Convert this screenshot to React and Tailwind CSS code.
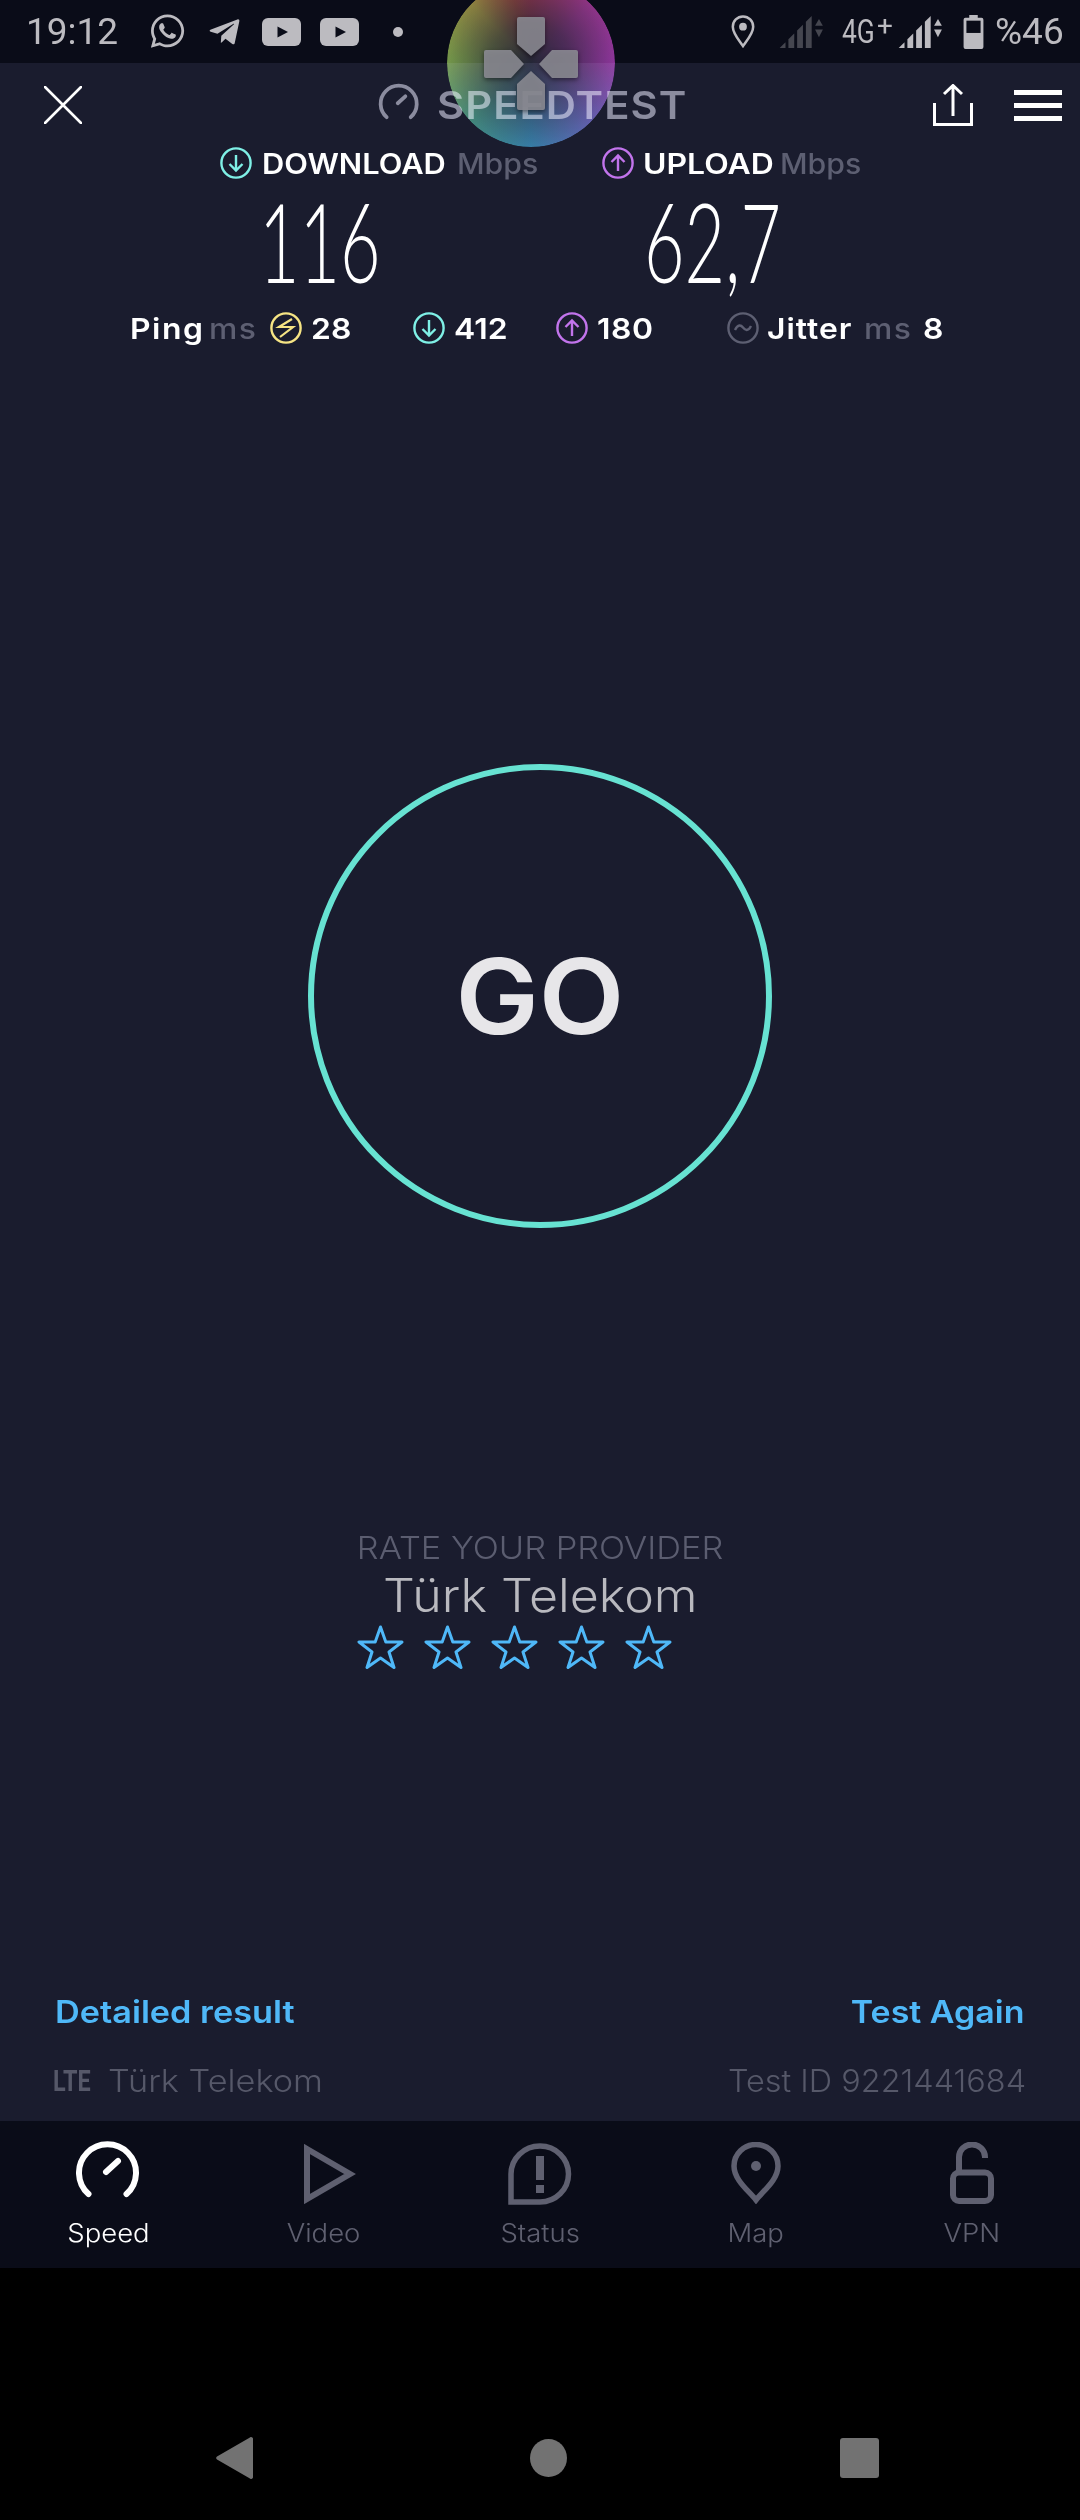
import React from "react";
import { FaWhatsapp, FaTelegramPlane } from "react-icons/fa";

const Gauge = ({ className, sw = 6 }) => (
  <svg viewBox="0 0 64 60" className={className} fill="none" stroke="currentColor" strokeWidth={sw} strokeLinecap="round">
    <path d="M12.5 54 A28.5 28.5 0 1 1 50.5 54" />
    <path d="M30 32 L42 21" />
  </svg>
);

const CircleArrow = ({ up, className }) => (
  <svg viewBox="0 0 32 32" className={className} fill="none" stroke="currentColor" strokeWidth="2.4">
    <circle cx="16" cy="16" r="14.6" />
    {up ? <path d="M16 24 V9 M9.5 15 L16 8.5 L22.5 15" /> : <path d="M16 8 V23 M9.5 17 L16 23.5 L22.5 17" />}
  </svg>
);

const Yt = () => (
  <svg viewBox="0 0 39 28" className="w-[39px] h-[28px] shrink-0">
    <rect width="39" height="28" rx="6" fill="#bcbbc0" />
    <path d="M15.5 8.5 L26 14 L15.5 19.5 Z" fill="#0a0c18" />
  </svg>
);

const Signal = ({ color, arrowUp, arrowDown }) => (
  <svg viewBox="0 0 45 34" className="w-[45px] h-[33px] shrink-0">
    <path d="M0 34 L6 28 V34 Z" fill={color} />
    <path d="M9 34 V25 L15 19 V34 Z" fill={color} />
    <path d="M18 34 V16 L24 10 V34 Z" fill={color} />
    <path d="M27 34 V7 L33 1 V34 Z" fill={color} />
    <path d="M36.5 11 L40.5 4 L44.5 11 Z" fill={arrowUp} />
    <path d="M36.5 15 L44.5 15 L40.5 23 Z" fill={arrowDown} />
  </svg>
);

const Star = () => (
  <svg viewBox="0 0 47 44" className="w-[47px] h-[44px] shrink-0" fill="none" stroke="#4fb8f8" strokeWidth="3" strokeLinejoin="round">
    <path d="M23.5 2 L28.8 17 L45 17 L32 27 L37 42.5 L23.5 33 L10 42.5 L15 27 L2 17 L18.2 17 Z" />
  </svg>
);

export default function App() {
  return (
    <div className="relative w-[1080px] h-[2520px] bg-black overflow-hidden flex flex-col font-['Inter','Liberation_Sans',sans-serif]">
      {/* Status bar */}
      <div className="h-[63px] shrink-0 bg-[#0a0c18] flex items-center text-[#bcbbc0] font-['Roboto',sans-serif]">
        <span className="ml-[26px] w-[100px] text-[37px] leading-none">19:12</span>
        <FaWhatsapp className="ml-[23px] w-[37px] h-[38px] shrink-0 -mt-[1px]" />
        <FaTelegramPlane className="ml-[20px] w-[37px] h-[34px] shrink-0" />
        <div className="ml-[19px]"><Yt /></div>
        <div className="ml-[19px]"><Yt /></div>
        <div className="ml-[34px] w-[10px] h-[10px] rounded-full bg-[#bcbbc0]" />
        <svg viewBox="0 0 24 34" className="ml-[328px] w-[24px] h-[33px] shrink-0" fill="none" stroke="#bcbbc0" strokeWidth="2.6">
          <path d="M12 32 C8 26 1.5 19 1.5 12 A10.5 10.5 0 0 1 22.5 12 C22.5 19 16 26 12 32 Z" />
          <circle cx="12" cy="12" r="4" fill="#bcbbc0" stroke="none" />
        </svg>
        <div className="ml-[24px]"><Signal color="#45464f" arrowUp="#45464f" arrowDown="#45464f" /></div>
        <span className="ml-[18px] w-[35px] text-[33px] leading-none scale-x-[0.8] origin-left">4G</span>
        <span className="w-[21px] text-[28px] leading-none -mt-[12px]">+</span>
        <div><Signal color="#bcbbc0" arrowUp="#bcbbc0" arrowDown="#bcbbc0" /></div>
        <svg viewBox="0 0 21 36" className="ml-[20px] w-[21px] h-[34px] shrink-0">
          <path d="M6 0 H15 V3 H19 A2 2 0 0 1 21 5 V34 A2 2 0 0 1 19 36 H2 A2 2 0 0 1 0 34 V5 A2 2 0 0 1 2 3 H6 Z" fill="#bcbbc0" />
          <rect x="3" y="6" width="15" height="13" fill="#0a0c18" />
        </svg>
        <span className="ml-[11px] text-[37px] leading-none">%46</span>
      </div>

      {/* Main */}
      <div className="h-[2058px] shrink-0 bg-[#1a1c2e] flex flex-col">
        {/* Header */}
        <div className="h-[84px] shrink-0 flex items-center text-white">
          <svg viewBox="0 0 38 38" className="ml-[44px] w-[38px] h-[38px] shrink-0" stroke="white" strokeWidth="2.6" strokeLinecap="round">
            <path d="M1 1 L37 37 M37 1 L1 37" />
          </svg>
          <Gauge className="ml-[296px] -mt-[6px] w-[42px] h-[38px] text-[#8b8c9f] shrink-0" sw={6} />
          <span className="ml-[17px] w-[249px] text-[38px] leading-none font-semibold text-[#8b8c9f] tracking-[0.9px] scale-x-[1.1] origin-left whitespace-nowrap">SPEEDTEST</span>
          <svg viewBox="0 0 40 42" className="ml-[247px] w-[40px] h-[42px] shrink-0" fill="none" stroke="white" strokeWidth="3">
            <path d="M1.5 19 V40.5 H38.5 V19" />
            <path d="M20 32 V2 M11 10 L20 1.5 L29 10" />
          </svg>
          <div className="ml-[41px] w-[48px] h-[31px] shrink-0 flex flex-col justify-between">
            <div className="h-[5px] bg-white" />
            <div className="h-[5px] bg-white" />
            <div className="h-[5px] bg-white" />
          </div>
        </div>

        {/* Titles */}
        <div className="h-[32px] shrink-0 flex items-center text-[28px] leading-none">
          <div className="w-[602px] shrink-0 flex items-center pl-[220px]">
            <CircleArrow className="w-[32px] h-[32px] text-[#7ff0e6] shrink-0" />
            <span className="ml-[10px] mt-[2px] w-[195px] font-semibold text-white whitespace-nowrap scale-x-[1.1] origin-left">DOWNLOAD</span>
            <span className="mt-[2px] font-medium text-[#5d5f72] whitespace-nowrap scale-x-[1.08] origin-left">Mbps</span>
          </div>
          <div className="flex items-center">
            <CircleArrow up className="w-[32px] h-[32px] text-[#c274ec] shrink-0" />
            <span className="ml-[9px] mt-[2px] w-[137px] font-semibold text-white whitespace-nowrap scale-x-[1.14] origin-left">UPLOAD</span>
            <span className="mt-[2px] font-medium text-[#5d5f72] whitespace-nowrap scale-x-[1.08] origin-left">Mbps</span>
          </div>
        </div>

        {/* Numbers */}
        <div className="h-[133px] pb-[12px] shrink-0 flex items-center text-white font-['Lato',sans-serif] font-light text-[111px] leading-[90px]">
          <div className="ml-[259px] w-[385px] shrink-0">
            <span className="inline-block scale-x-[0.63] origin-left">116</span>
          </div>
          <div>
            <span className="inline-block scale-x-[0.63] origin-left whitespace-nowrap">62,7</span>
          </div>
        </div>

        {/* Ping row */}
        <div className="h-[32px] shrink-0 flex items-center text-[29px] leading-none font-semibold text-white">
          <span className="ml-[130px] w-[79px] whitespace-nowrap tracking-[1.4px] scale-x-[1.1] origin-left">Ping</span>
          <span className="w-[61px] font-medium text-[#5d5f72] tracking-[1.4px] scale-x-[1.1] origin-left">ms</span>
          <svg viewBox="0 0 32 32" className="w-[32px] h-[32px] shrink-0" fill="none" stroke="#f6e484" strokeWidth="2.4">
            <circle cx="16" cy="16" r="14.6" />
            <path d="M22 7 L9 15 H23 L10 25" strokeWidth="2.2" />
          </svg>
          <span className="ml-[9px] w-[102px] scale-x-[1.1] origin-left">28</span>
          <CircleArrow className="w-[32px] h-[32px] text-[#7ff0e6] shrink-0" />
          <span className="ml-[9px] w-[102px] scale-x-[1.1] origin-left">412</span>
          <CircleArrow up className="w-[32px] h-[32px] text-[#c274ec] shrink-0" />
          <span className="ml-[9px] w-[130px] tracking-[0.5px] scale-x-[1.1] origin-left">180</span>
          <svg viewBox="0 0 32 32" className="w-[32px] h-[32px] shrink-0" fill="none" stroke="#5d5f72" strokeWidth="2.4">
            <circle cx="16" cy="16" r="14.6" />
            <path d="M8 18 C11 12 14 13 16 15.5 C18 18 21 20 24 14" />
          </svg>
          <span className="ml-[8px] w-[97px] whitespace-nowrap tracking-[0.9px] scale-x-[1.1] origin-left">Jitter</span>
          <span className="w-[59px] font-medium text-[#5d5f72] tracking-[1.4px] scale-x-[1.1] origin-left">ms</span>
          <span className="scale-x-[1.1] origin-left">8</span>
        </div>

        {/* GO */}
        <div className="mt-[420px] self-center w-[464px] h-[464px] shrink-0 rounded-full border-[6px] border-[#67e2d2] flex items-center justify-center">
          <span className="text-[104px] leading-none font-semibold text-[#e7e6e9] scale-x-[1.07]">GO</span>
        </div>

        {/* Provider */}
        <div className="mt-[302px] flex flex-col items-center">
          <span className="text-[31px] leading-[36px] font-light text-[#5b5d70] whitespace-nowrap scale-x-[1.11]">RATE YOUR PROVIDER</span>
          <span className="mt-[2px] text-[46px] leading-[54px] font-light text-[#b9b9bf] whitespace-nowrap scale-x-[1.09]">Türk Telekom</span>
          <div className="mt-[3px] -ml-[51px] flex gap-[20px]">
            <Star /><Star /><Star /><Star /><Star />
          </div>
        </div>

        {/* Bottom */}
        <div className="mt-auto px-[55px] flex justify-between text-[31px] leading-[36px] font-semibold text-[#4fb8f8]">
          <span className="scale-x-[1.105] origin-left">Detailed result</span>
          <span className="scale-x-[1.096] origin-right">Test Again</span>
        </div>
        <div className="mt-[33px] mb-[22px] pl-[53px] pr-[54px] flex items-center text-[31px] leading-[36px] font-light text-[#565869]">
          <span className="w-[55px] text-[30px] font-bold font-['Roboto',sans-serif] inline-block scale-x-[0.78] origin-left">LTE</span>
          <span className="scale-x-[1.105] origin-left">Türk Telekom</span>
          <span className="ml-auto scale-x-[1.046] origin-right">Test ID 9221441684</span>
        </div>
      </div>

      {/* Tab bar */}
      <div className="h-[147px] shrink-0 bg-[#0a0c18] grid grid-cols-5 text-[25px] leading-[30px] font-light text-[#5f6070]">
        <div className="flex flex-col items-center pt-[19px] text-white">
          <Gauge className="w-[64px] h-[60px]" sw={6} />
          <span className="mt-[18px] scale-x-[1.1]">Speed</span>
        </div>
        <div className="flex flex-col items-center pt-[23px]">
          <svg viewBox="0 0 52 60" className="ml-[12px] w-[52px] h-[60px]" fill="none" stroke="#5f6070" strokeWidth="6">
            <path d="M3 5 L46 30 L3 55 Z" />
          </svg>
          <span className="mt-[14px] scale-x-[1.1]">Video</span>
        </div>
        <div className="flex flex-col items-center pt-[22px]">
          <svg viewBox="0 0 64 62" className="w-[64px] h-[62px]" fill="none" stroke="#5f6070" strokeWidth="5.5">
            <path d="M32 3 A28.5 28 0 1 1 32 59 H3 V31 A29 28 0 0 1 32 3 Z" />
            <path d="M32 13 V37" strokeWidth="8" />
            <rect x="28" y="42" width="8" height="8" fill="#5f6070" stroke="none" />
          </svg>
          <span className="mt-[13px] scale-x-[1.1]">Status</span>
        </div>
        <div className="flex flex-col items-center pt-[21px]">
          <svg viewBox="0 0 50 62" className="w-[50px] h-[62px]" fill="none" stroke="#5f6070" strokeWidth="5.5">
            <path d="M25 58 C18 49 3 38 3 24 A22 21.5 0 0 1 47 24 C47 38 32 49 25 58 Z" />
            <circle cx="25" cy="24" r="5" fill="#5f6070" stroke="none" />
          </svg>
          <span className="mt-[14px] scale-x-[1.1]">Map</span>
        </div>
        <div className="flex flex-col items-center pt-[21px]">
          <svg viewBox="0 0 44 62" className="w-[44px] h-[62px]" fill="none" stroke="#5f6070" strokeWidth="6">
            <rect x="3" y="30.5" width="38" height="28.5" rx="6" />
            <path d="M9 30 V15 A12.5 12 0 0 1 35 15 V16" />
          </svg>
          <span className="mt-[14px] scale-x-[1.1]">VPN</span>
        </div>
      </div>

      {/* Android nav */}
      <div className="flex-1 flex items-start pt-[169px] pl-[216px]">
        <svg viewBox="0 0 37 42" className="w-[37px] h-[42px] shrink-0" fill="#727272">
          <path d="M33.5 0.8 A2 2 0 0 1 37 2.5 V39.5 A2 2 0 0 1 33.5 41.2 L1 22.5 A2 2 0 0 1 1 19.5 Z" />
        </svg>
        <div className="ml-[277px] mt-[2px] w-[37px] h-[38px] rounded-[50%] bg-[#727272]" />
        <div className="ml-[273px] mt-[1px] w-[39px] h-[40px] rounded-[3px] bg-[#727272]" />
      </div>

      {/* Floating bubble over the app */}
      <div className="absolute left-[447px] -top-[21px] w-[168px] h-[168px]">
        <div className="absolute inset-0 rounded-full mix-blend-screen bg-[radial-gradient(circle,#1c1c22_0%,rgba(28,28,34,0.6)_35%,rgba(0,0,0,0)_72%),conic-gradient(from_0deg,#8a2a3a_0deg,#8a2a7a_45deg,#8a2c92_90deg,#56489c_130deg,#1f6e94_180deg,#2c7a60_225deg,#6f9638_270deg,#8a7e2c_315deg,#8a3a28_345deg,#8a2a3a_360deg)] [mask-image:radial-gradient(circle,black_90%,transparent_100%)]" />
        <svg viewBox="0 0 168 168" className="absolute inset-0 w-[168px] h-[168px] drop-shadow-[0_2px_2px_rgba(0,0,0,0.5)]" fill="#8c8c94" fillOpacity="0.88" strokeLinejoin="round">
          <path d="M70 40 Q70 38 72 38 H96 Q98 38 98 40 V65 L84 77 L70 65 Z" />
          <path d="M39 71 H64 L77 85 L64 99 H39 Q37 99 37 97 V73 Q37 71 39 71 Z" />
          <path d="M129 71 H105 L92 85 L105 99 H129 Q131 99 131 97 V73 Q131 71 129 71 Z" />
          <path d="M84 92 L98 105 V129 Q98 131 96 131 H72 Q70 131 70 129 V105 Z" />
        </svg>
      </div>
    </div>
  );
}
